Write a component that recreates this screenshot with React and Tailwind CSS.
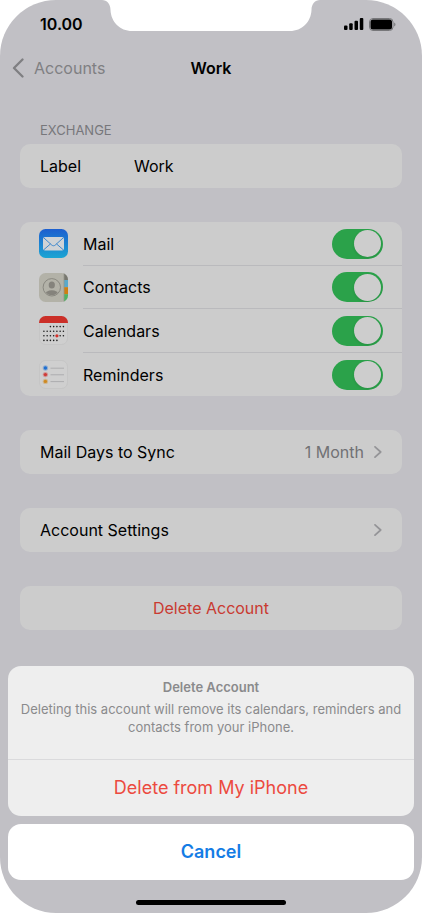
import { useState } from 'react';

function MailIcon() {
  return (
    <svg viewBox="0 0 29 29" className="w-[29px] h-[29px] shrink-0" aria-hidden="true">
      <defs>
        <linearGradient id="mailBg" x1="0" y1="0" x2="0" y2="1">
          <stop offset="0" stopColor="#1d5fcf" />
          <stop offset="1" stopColor="#1ba5d3" />
        </linearGradient>
      </defs>
      <rect width="29" height="29" rx="6.5" fill="url(#mailBg)" />
      <rect x="4" y="8" width="21" height="13.5" rx="2" fill="#cfd3d6" />
      <path d="M4.6 8.7l8.2 7.4c1 .9 2.4.9 3.4 0l8.2-7.4M4.6 20.9l6.9-6M24.4 20.9l-6.9-6" fill="none" stroke="#2f80cc" strokeWidth="0.9" />
    </svg>
  );
}

function ContactsIcon() {
  return (
    <svg viewBox="0 0 29 29" className="w-[29px] h-[29px] shrink-0" aria-hidden="true">
      <defs>
        <clipPath id="contactsShape"><rect width="29" height="29" rx="6.5" /></clipPath>
        <clipPath id="contactsFace"><circle cx="12.8" cy="14.3" r="7.9" /></clipPath>
      </defs>
      <g clipPath="url(#contactsShape)">
        <rect width="29" height="29" fill="#b3b2a8" />
        <rect x="25" width="4" height="7" fill="#77776f" />
        <rect x="25" y="7" width="4" height="7.2" fill="#5aa9cb" />
        <rect x="25" y="14.2" width="4" height="7" fill="#cf7f12" />
        <rect x="25" y="21.2" width="4" height="8" fill="#4fb463" />
        <rect x="24.6" width="0.8" height="29" fill="#94938b" />
      </g>
      <g clipPath="url(#contactsFace)" fill="#85837c">
        <ellipse cx="12.8" cy="12" rx="3.1" ry="3.6" />
        <ellipse cx="12.8" cy="21.5" rx="6.6" ry="4.2" />
      </g>
      <circle cx="12.8" cy="14.3" r="8.7" fill="none" stroke="#85837c" strokeWidth="0.9" />
    </svg>
  );
}

// one entry per week, listing which day columns have a dot
const weeks = [
  { y: 10.6, days: [2, 3, 4, 5, 6] },
  { y: 15.2, days: [0, 1, 2, 3, 4, 5, 6] },
  { y: 19.8, days: [0, 1, 2, 3, 4, 5, 6] },
  { y: 24.4, days: [0, 1, 2, 3, 4] },
];

function CalendarsIcon() {
  return (
    <svg viewBox="0 0 29 29" className="w-[29px] h-[29px] shrink-0" aria-hidden="true">
      <defs>
        <clipPath id="calShape"><rect width="29" height="29" rx="6.5" /></clipPath>
      </defs>
      <rect x="0.5" y="0.5" width="28" height="28" rx="6" fill="#cfcfcf" stroke="#c1c1c1" strokeWidth="0.6" />
      <rect width="29" height="7" fill="#cb2f28" clipPath="url(#calShape)" />
      {weeks.map((week) =>
        week.days.map((day) => (
          <circle key={`${week.y}-${day}`} cx={4.9 + day * 3.25} cy={week.y} r="0.8" fill="#1c1c1c" />
        ))
      )}
      <circle cx="17.9" cy="19.8" r="1.6" fill="#d5302a" />
    </svg>
  );
}

function RemindersIcon() {
  const lines = [
    { y: 8, color: '#1f6fd0' },
    { y: 14.6, color: '#cf3b38' },
    { y: 21.4, color: '#cf8a22' },
  ];
  return (
    <svg viewBox="0 0 29 29" className="w-[29px] h-[29px] shrink-0" aria-hidden="true">
      <rect x="0.5" y="0.5" width="28" height="28" rx="6" fill="#cfcfcf" stroke="#c1c1c1" strokeWidth="0.6" />
      {lines.map((line) => (
        <g key={line.y}>
          <circle cx="6.4" cy={line.y} r="2.7" fill={line.color} fillOpacity="0.35" />
          <circle cx="6.4" cy={line.y} r="1.7" fill={line.color} />
          <line x1="11.5" x2="25" y1={line.y + 0.2} y2={line.y + 0.2} stroke="#a9a9ab" strokeWidth="0.9" />
        </g>
      ))}
    </svg>
  );
}

function Chevron() {
  return (
    <svg viewBox="0 0 8 12" className="w-2 h-3 shrink-0" aria-hidden="true">
      <path d="M1 0.8L6.7 6L1 11.2" fill="none" stroke="#949497" strokeWidth="1.7" strokeLinecap="round" strokeLinejoin="round" />
    </svg>
  );
}

function StatusBar() {
  return (
    <div className="relative h-12 flex items-center justify-between pl-10 pr-[26px]">
      <svg viewBox="0 0 218 31" className="absolute top-0 left-1/2 -translate-x-1/2 w-[218px] h-[31px]" aria-hidden="true">
        <path d="M0 0C5 0 8.500 4 8.500 10C9 22 18 31 30 31H188C200 31 209 22 209.500 10C209.500 4 213 0 218 0Z" fill="#fff" />
      </svg>
      <span className="text-base font-semibold">10.00</span>
      <div className="flex items-center gap-[5px]">
        <svg viewBox="0 0 20 12" className="w-5 h-3" aria-hidden="true">
          <rect x="0" y="7.500" width="3.500" height="4.500" rx="1" />
          <rect x="5.200" y="5.300" width="3.500" height="6.700" rx="1" />
          <rect x="10.500" y="2.700" width="3.500" height="9.300" rx="1" />
          <rect x="15.800" y="0" width="3.500" height="12" rx="1" />
        </svg>
        <svg viewBox="0 0 27 13" className="w-[27px] h-[13px]" aria-hidden="true">
          <rect x="0.500" y="0.500" width="23.500" height="12" rx="3.500" fill="none" stroke="#77777a" />
          <rect x="1.500" y="1.500" width="21.500" height="10" rx="2.500" />
          <path d="M25.200 4.500c1.700.8 1.700 3.200 0 4z" fill="#77777a" />
        </svg>
      </div>
    </div>
  );
}

export default function App() {
  const [label, setLabel] = useState('Work');
  const [synced, setSynced] = useState({ mail: true, contacts: true, calendars: true, reminders: true });

  const services = [
    { id: 'mail', name: 'Mail', icon: <MailIcon /> },
    { id: 'contacts', name: 'Contacts', icon: <ContactsIcon /> },
    { id: 'calendars', name: 'Calendars', icon: <CalendarsIcon /> },
    { id: 'reminders', name: 'Reminders', icon: <RemindersIcon /> },
  ];

  return (
    <div className="bg-white font-[Inter,sans-serif] text-base text-black">
      <div className="min-h-screen flex flex-col bg-[#c1c0c5] rounded-[56px] overflow-hidden">
        <StatusBar />

        <header className="h-10 grid grid-cols-3 items-center px-3">
          <button className="flex items-center gap-2.5 text-[#7f7f82]">
            <svg viewBox="0 0 12 20" className="w-3 h-5" aria-hidden="true">
              <path d="M10.500 1.500L2 10L10.500 18.500" fill="none" stroke="currentColor" strokeWidth="2.300" strokeLinecap="round" strokeLinejoin="round" />
            </svg>
            Accounts
          </button>
          <h1 className="text-center font-semibold">Work</h1>
        </header>

        <main className="flex flex-col gap-[34px] px-5 pt-8">
          <section>
            <h2 className="px-5 mb-1 text-[13px] leading-5 text-[#77777b]">EXCHANGE</h2>
            <div className="h-11 flex items-center px-5 bg-[#ccc] rounded-[10px]">
              <label htmlFor="account-label" className="w-[94px] shrink-0">Label</label>
              <input
                id="account-label"
                type="text"
                value={label}
                onChange={(e) => setLabel(e.target.value)}
                className="flex-1 min-w-0 bg-transparent outline-none"
              />
            </div>
          </section>

          <ul className="h-[174px] grid grid-rows-4 bg-[#ccc] rounded-[10px]">
            {services.map((service, i) => (
              <li key={service.id} className="flex items-center gap-[15px] pl-[19px]">
                {service.icon}
                <div className={`flex-1 h-full flex items-center justify-between pt-px pr-[19px] ${i < services.length - 1 ? 'border-b border-[#bababd]' : ''}`}>
                  <label htmlFor={service.id}>{service.name}</label>
                  <input
                    id={service.id}
                    type="checkbox"
                    role="switch"
                    checked={synced[service.id]}
                    onChange={() => setSynced({ ...synced, [service.id]: !synced[service.id] })}
                    className="appearance-none flex items-center w-[51px] h-[30px] p-0.5 rounded-full bg-[#a5a5a8] checked:bg-[#2ba24a] before:block before:size-[27px] before:rounded-full before:bg-[#cdcdcd] before:shadow-[0_1px_3px_rgba(0,0,0,0.12)] checked:before:ml-5 overflow-hidden"
                  />
                </div>
              </li>
            ))}
          </ul>

          <button className="h-11 flex items-center justify-between px-5 bg-[#ccc] rounded-[10px]">
            Mail Days to Sync
            <span className="flex items-center gap-2.5 text-[#717174]">
              1 Month
              <Chevron />
            </span>
          </button>

          <button className="h-11 flex items-center justify-between px-5 bg-[#ccc] rounded-[10px]">
            Account Settings
            <Chevron />
          </button>

          <button className="h-11 bg-[#ccc] rounded-[10px] text-[#c93a31]">Delete Account</button>
        </main>

        <div role="dialog" aria-labelledby="sheet-title" className="mt-auto px-2 pt-8 pb-2 flex flex-col gap-2">
          <div className="bg-[#eee] rounded-[13px]">
            <div className="px-3 pt-3 pb-[23px] text-center text-[13px] leading-[18px] text-[#8a8a8c] border-b border-[#dadadc]">
              <h2 id="sheet-title" className="mb-1 font-semibold">Delete Account</h2>
              <p>Deleting this account will remove its calendars, reminders and contacts from your iPhone.</p>
            </div>
            <button className="w-full h-14 text-lg text-[#ec4a3f]">Delete from My iPhone</button>
          </div>
          <button className="h-14 bg-white rounded-[13px] text-lg font-semibold text-[#147ce5]">Cancel</button>
          <div className="self-center mt-3 w-[150px] h-[5px] rounded-full bg-black"></div>
        </div>
      </div>
    </div>
  );
}
